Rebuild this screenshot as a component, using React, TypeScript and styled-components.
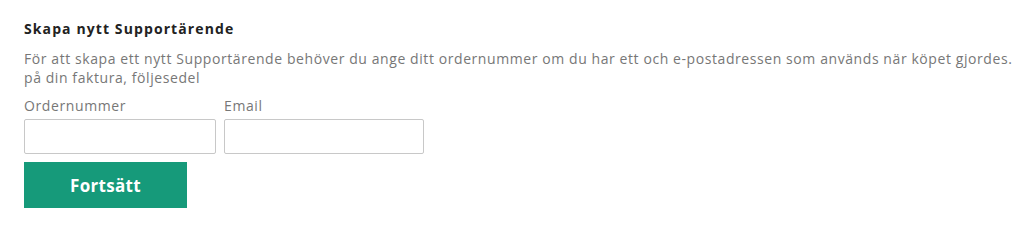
import React from 'react';
import styled, { createGlobalStyle } from 'styled-components';

const Global = createGlobalStyle`
  body {
    margin: 0;
    background: #fff;
    font-family: 'Open Sans', 'Liberation Sans', sans-serif;
  }
`;

const Wrapper = styled.section`
  padding: 19px 0 0 24px;
  width: 994px;
`;

const Title = styled.h3`
  margin: 0 0 10px;
  font-size: 14px;
  font-weight: 700;
  color: #222;
  line-height: 20px;
  letter-spacing: 1.1px;
`;

const Intro = styled.p`
  margin: 0 0 10px;
  font-size: 14px;
  line-height: 19px;
  color: #777;
  letter-spacing: 0.58px;
`;

const Fields = styled.div`
  display: flex;
  gap: 8px;
`;

const Field = styled.label<{ $width: number }>`
  display: flex;
  flex-direction: column;
  width: ${(p) => p.$width}px;
  font-size: 14px;
  color: #777;
  letter-spacing: 0.6px;
  line-height: 18px;
`;

const Input = styled.input`
  margin-top: 4px;
  height: 35px;
  box-sizing: border-box;
  border: 1px solid #c8c8c8;
  border-radius: 2px;
  padding: 0 8px;
  font: inherit;
  outline: none;
`;

const Button = styled.button`
  margin-top: 8px;
  width: 163px;
  height: 46px;
  border: none;
  background: #169a7a;
  color: #fff;
  font-family: 'Open Sans', 'Liberation Sans', sans-serif;
  font-size: 17px;
  font-weight: 700;
  letter-spacing: 0.3px;
  cursor: pointer;
`;

const App = () => (
  <>
    <Global />
    <Wrapper>
      <Title>Skapa nytt Supportärende</Title>
      <Intro>
        För att skapa ett nytt Supportärende behöver du ange ditt ordernummer om du har ett och e-postadressen som används när köpet gjordes.
        <br />
        på din faktura, följesedel
      </Intro>
      <Fields>
        <Field $width={192}>
          Ordernummer
          <Input type="text" />
        </Field>
        <Field $width={200}>
          Email
          <Input type="email" />
        </Field>
      </Fields>
      <Button>Fortsätt</Button>
    </Wrapper>
  </>
);

export default App;
